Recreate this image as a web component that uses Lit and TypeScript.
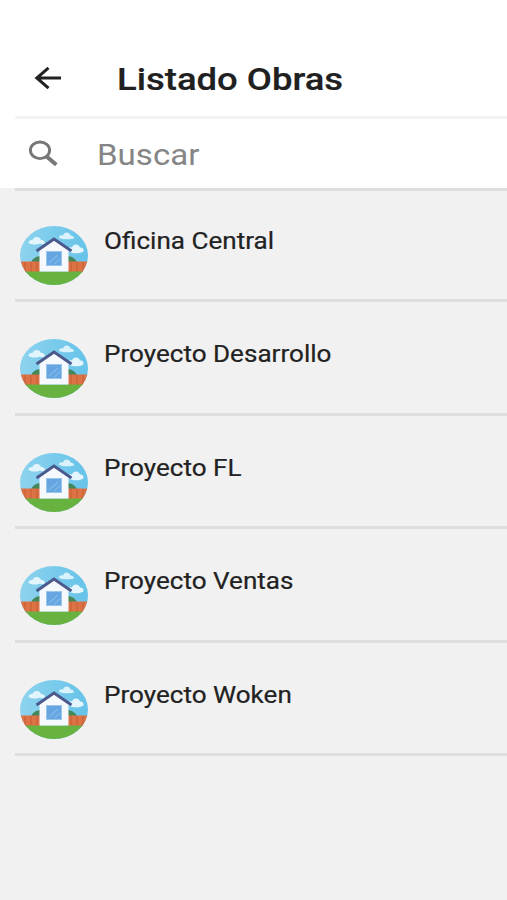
import { LitElement, html, css } from "lit";
import { customElement, property } from "lit/decorators.js";

@customElement("house-avatar")
class HouseAvatar extends LitElement {
  static styles = css`
    :host { display: block; width: 68px; height: 59px; }
    svg { display: block; }
  `;
  render() {
    return html`
      <svg width="68" height="59" viewBox="0 0 68 59">
        <defs>
          <clipPath id="disc"><ellipse cx="34" cy="29.5" rx="34" ry="29.5" /></clipPath>
          <linearGradient id="sky" x1="0" x2="1" y1="0" y2="0">
            <stop offset="0" stop-color="#8dd3ee" /><stop offset="1" stop-color="#66c3e9" />
          </linearGradient>
        </defs>
        <g clip-path="url(#disc)">
          <rect width="68" height="59" fill="url(#sky)" />
          <path d="M8.500 17c0-2.500 2-3.500 4-3 1-4 7.500-4 8.500 0 2.500-.3 4 1.500 4 3.500-2 1.500-4 .5-5 0-3 1.500-8 1.500-11.500-.5z" fill="#e2f5fc" />
          <path d="M39 12c0-2.500 2-3 4-2.500 1-4 6.500-4 7.500 0 2-.2 3.500 1.200 3.500 3-3 1-11 1.200-15-.5z" fill="#d9f2fb" />
          <path d="M47 24c1-3 3-3 5-2.500 1-4 7-4 8 0 2.500-.2 4 1.500 3.500 4-4 2.500-10 2-13 1z" fill="#e4f6fc" />
          <path d="M11 38c0-4 3-7 9-8v8zM57 38c0-4-3-7-9-8v8z" fill="#43875a" />
          <path d="M0 35.500h20V47H0zM48 35.500h20V47H48z" fill="#dd7244" />
          <path d="M5 36v10M11 36v10M17 36v10M51 36v10M57 36v10M63 36v10" stroke="#c8623b" stroke-width="1.200" />
          <rect y="45.500" width="68" height="14" fill="#68b33f" />
          <path d="M19.500 23L34 13l14.500 10v22.500h-29z" fill="#f5f8fd" />
          <path d="M16.500 25L34 13l17.500 12" fill="none" stroke="#4c598c" stroke-width="2.900" />
          <rect x="26.500" y="25.500" width="15" height="14" fill="#65a6e2" stroke="#9cc5ec" />
          <path d="M29 37l9-8M34 38l6-5" stroke="#83b9e9" stroke-width="1.200" />
        </g>
      </svg>`;
  }
}

@customElement("work-row")
class WorkRow extends LitElement {
  @property() name = "";
  static styles = css`
    :host {
      display: flex; box-sizing: border-box; height: 113.4px; margin-left: 15px;
      padding: 37px 0 0 5px; gap: 16px; border-bottom: 3px solid #dedede;
    }
    .name {
      font: 400 23px/28px Roboto, sans-serif; color: #222; white-space: nowrap;
      transform: scaleX(1.134); transform-origin: 0 0; margin-top: 2px; height: 28px;
      -webkit-text-stroke: 0.2px #222;
    }
  `;
  render() {
    return html`<house-avatar></house-avatar><span class="name">${this.name}</span>`;
  }
}

@customElement("app-root")
class AppRoot extends LitElement {
  static styles = css`
    :host { display: block; height: 900px; background: #f1f1f1; font-family: Roboto, sans-serif; overflow: hidden; }
    .bar, .search { display: flex; align-items: center; background: #fff; box-sizing: border-box; }
    .bar { height: 116px; padding: 40px 0 0 34px; }
    .rule { height: 3px; background: #fff; }
    .rule div { height: 3px; margin-left: 15px; background: #f4f4f4; }
    .search { height: 69px; padding: 0 0 0 28px; }
    .edge { height: 3px; margin-left: 15px; background: #dedede; }
    .works { margin-top: -2px; }
    .title, .hint { white-space: nowrap; transform-origin: 0 0; }
    .title { font-size: 31px; line-height: 38px; font-weight: 500; color: #202020; margin: 3px 0 0 55px; transform: scaleX(1.176); -webkit-text-stroke: 0.2px #202020; }
    .hint { font-size: 29px; line-height: 36px; color: #858585; margin: 3px 0 0 37.5px; transform: scaleX(1.14); }
    svg { display: block; flex: none; }
  `;
  private works = ["Oficina Central", "Proyecto Desarrollo", "Proyecto FL", "Proyecto Ventas", "Proyecto Woken"];
  render() {
    return html`
      <header class="bar">
        <svg width="28" height="24" viewBox="0 0 28 24" fill="none" stroke="#222" stroke-width="3">
          <path d="M27 12H3M14.500 1.800L2.800 12l11.700 10.200" />
        </svg>
        <span class="title">Listado Obras</span>
      </header>
      <div class="rule"><div></div></div>
      <div class="search">
        <svg width="31" height="27" viewBox="0 0 31 27" fill="none" stroke="#777">
          <ellipse cx="12" cy="10.300" rx="9.600" ry="8.300" stroke-width="2.900" />
          <path d="M18.300 16.200l10 8.600" stroke-width="4" />
        </svg>
        <span class="hint">Buscar</span>
      </div>
      <div class="edge"></div>
      <div class="works">${this.works.map((w) => html`<work-row .name=${w}></work-row>`)}</div>
    `;
  }
}
